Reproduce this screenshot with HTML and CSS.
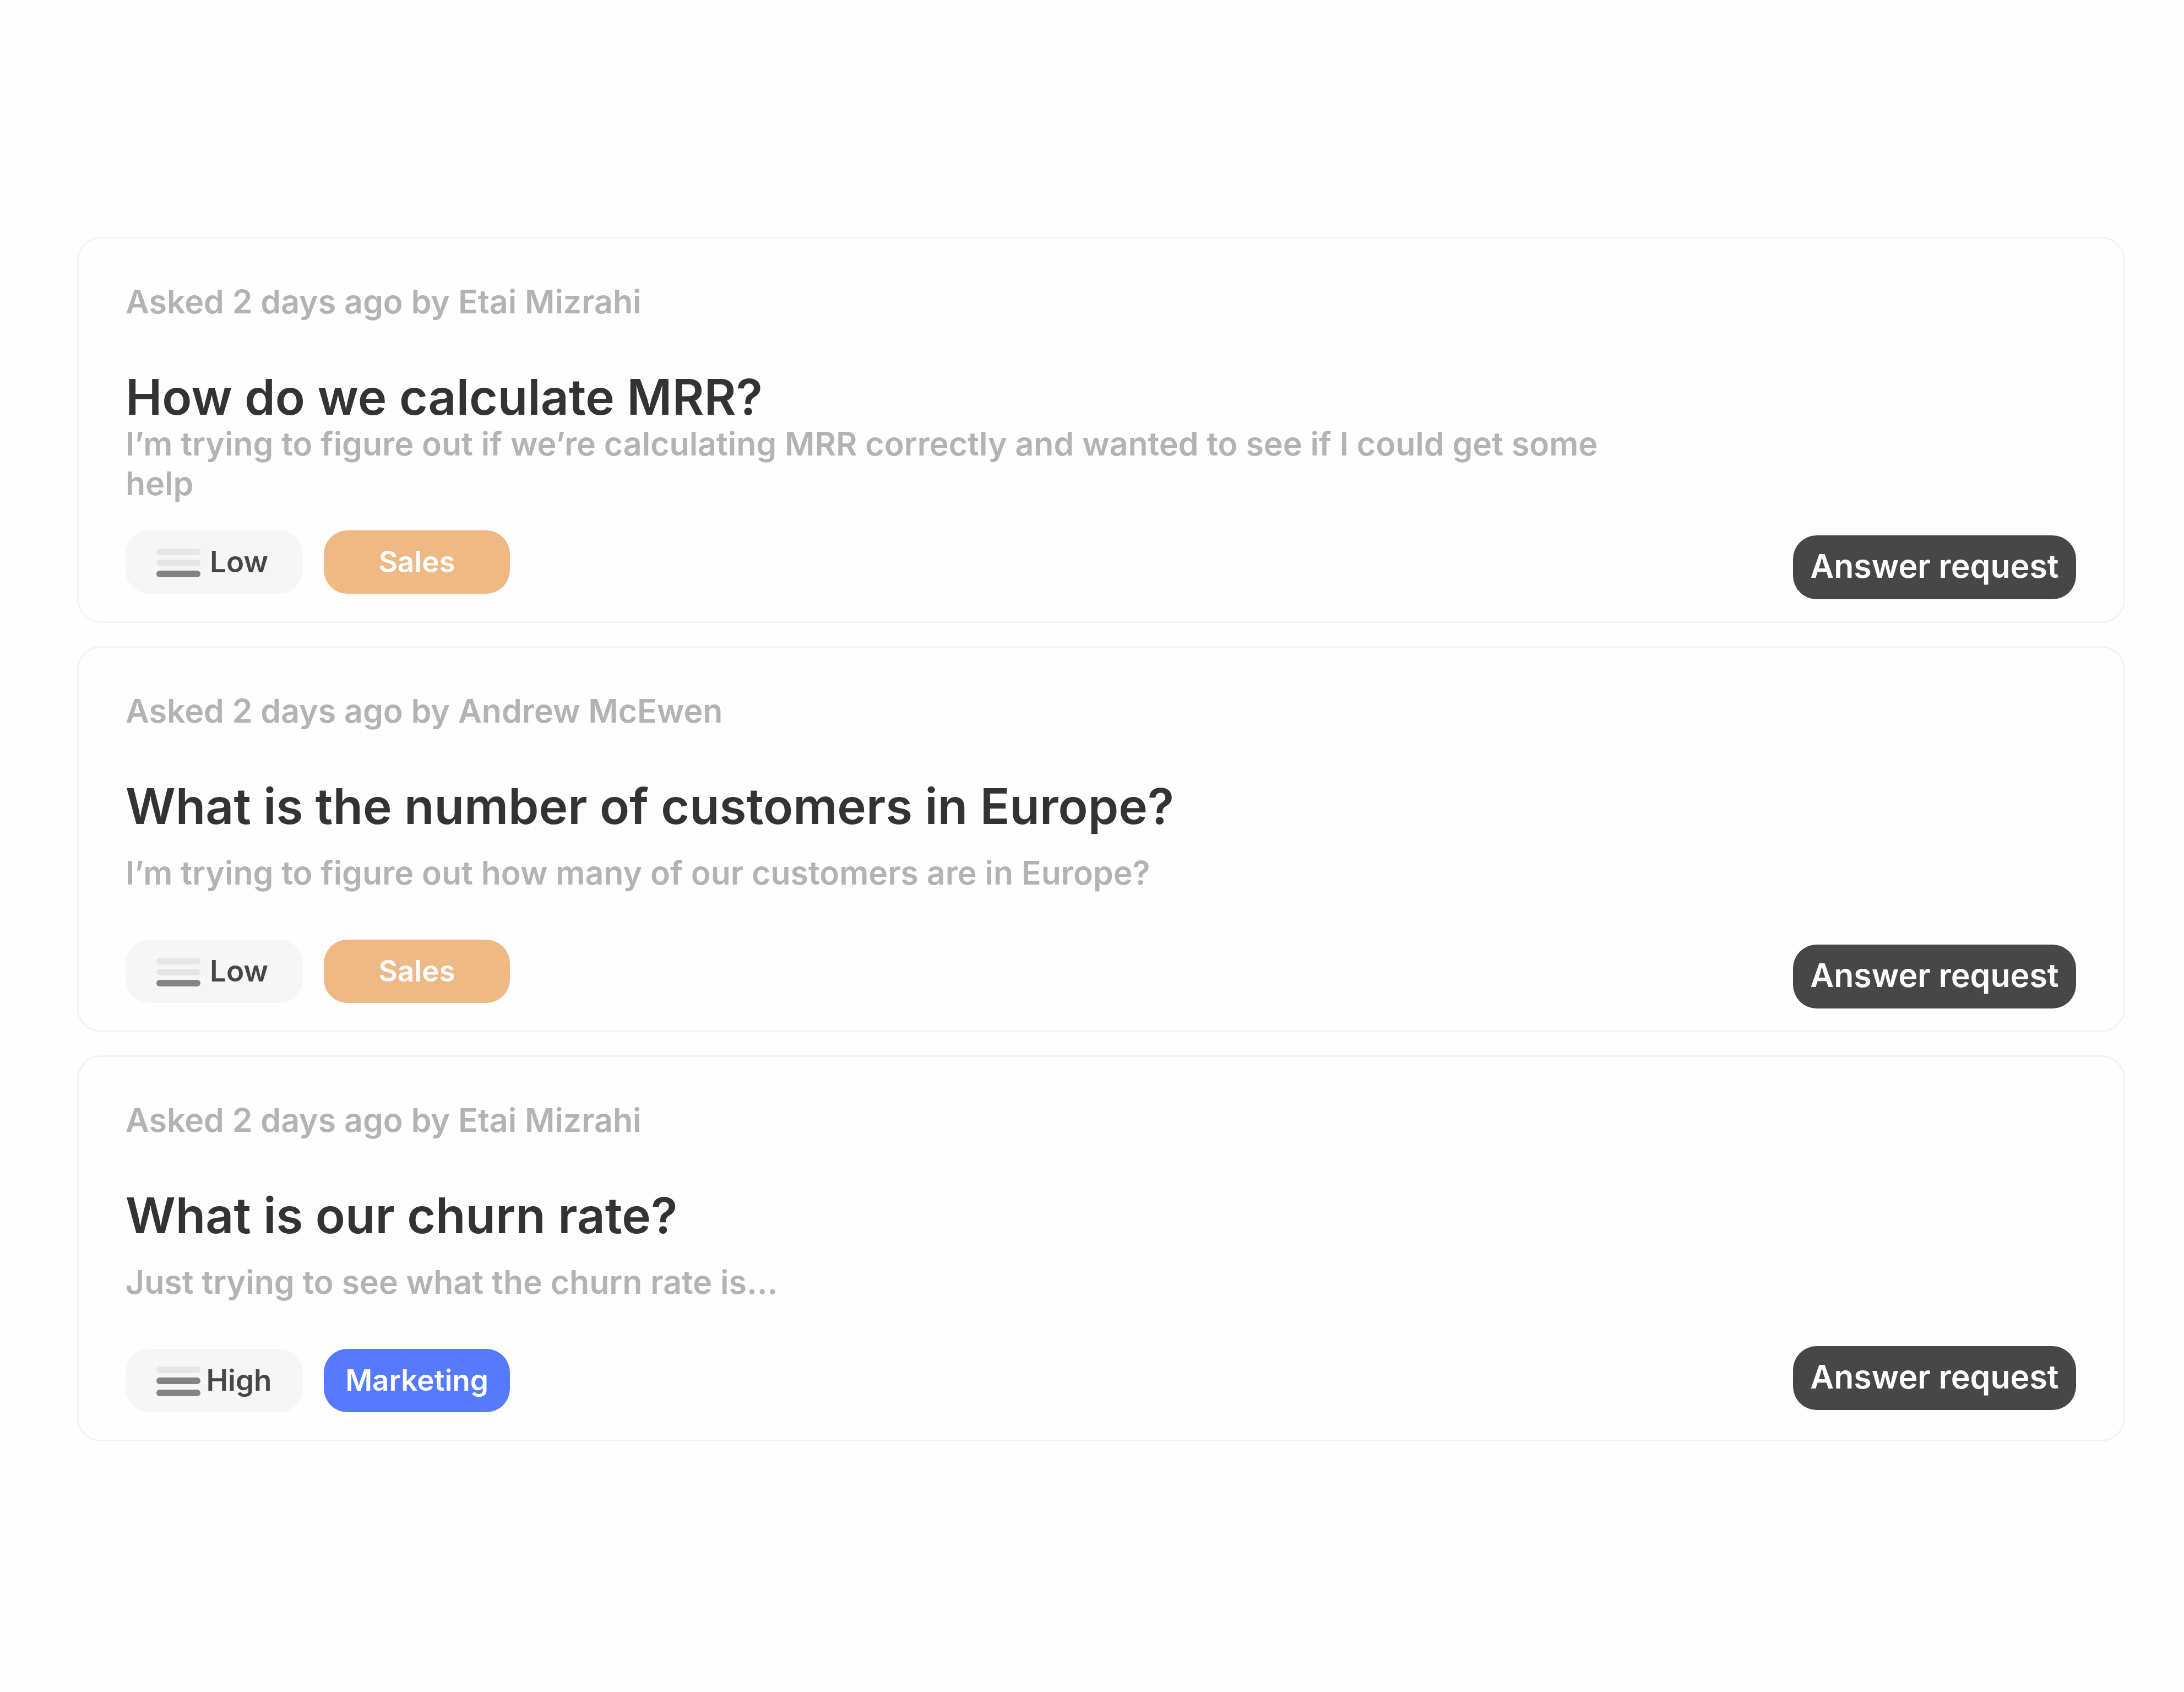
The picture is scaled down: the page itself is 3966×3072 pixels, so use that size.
FILE: index.html
```html
<!DOCTYPE html>
<html lang="en">
<head>
    <meta charset="UTF-8">
    <meta name="viewport" content="width=device-width, initial-scale=1.0">
    <title>Requests</title>
    <link rel="stylesheet" href="styles.css">
</head>
<body>

<main class="requests">
    <article class="card">
        <p class="meta">Asked 2 days ago by Etai Mizrahi</p>
        <h2 class="title">How do we calculate MRR?</h2>
        <div class="description">
            <p>I’m trying to figure out if we’re calculating MRR correctly and wanted to see if I could get some help</p>
        </div>
        <div class="card-footer">
            <div class="tags">
                <span class="tag priority">
                    <svg class="bars" viewBox="0 0 80 52" aria-hidden="true">
                        <rect class="bar" y="0" width="80" height="12" rx="6" />
                        <rect class="bar" y="20" width="80" height="12" rx="6" />
                        <rect class="bar on" y="40" width="80" height="12" rx="6" />
                    </svg>
                    <span class="level">Low</span>
                </span>
                <span class="tag team sales">Sales</span>
            </div>
            <button class="answer" type="button">Answer request</button>
        </div>
    </article>

    <article class="card">
        <p class="meta">Asked 2 days ago by Andrew McEwen</p>
        <h2 class="title">What is the number of customers in Europe?</h2>
        <div class="description">
            <p>I’m trying to figure out how many of our customers are in Europe?</p>
        </div>
        <div class="card-footer">
            <div class="tags">
                <span class="tag priority">
                    <svg class="bars" viewBox="0 0 80 52" aria-hidden="true">
                        <rect class="bar" y="0" width="80" height="12" rx="6" />
                        <rect class="bar" y="20" width="80" height="12" rx="6" />
                        <rect class="bar on" y="40" width="80" height="12" rx="6" />
                    </svg>
                    <span class="level">Low</span>
                </span>
                <span class="tag team sales">Sales</span>
            </div>
            <button class="answer" type="button">Answer request</button>
        </div>
    </article>

    <article class="card">
        <p class="meta">Asked 2 days ago by Etai Mizrahi</p>
        <h2 class="title">What is our churn rate?</h2>
        <div class="description">
            <p>Just trying to see what the churn rate is...</p>
        </div>
        <div class="card-footer top">
            <div class="tags">
                <span class="tag priority">
                    <svg class="bars" viewBox="0 0 80 54" aria-hidden="true">
                        <rect class="bar" y="0" width="80" height="12" rx="6" />
                        <rect class="bar on" y="20" width="80" height="12" rx="6" />
                        <rect class="bar on" y="42" width="80" height="12" rx="6" />
                    </svg>
                    <span class="level">High</span>
                </span>
                <span class="tag team marketing">Marketing</span>
            </div>
            <button class="answer" type="button">Answer request</button>
        </div>
    </article>
</main>

</body>
</html>
```

FILE: styles.css
```css
* {
    box-sizing: border-box;
}
body {
    margin: 0;
    background-color: #fefefe;
    color: #333;
    font-family: Inter, sans-serif;
    font-weight: 600;
}
p, h2 {
    margin: 0;
}
.requests {
    display: flex;
    flex-direction: column;
    gap: 42px;
    padding: 430px 107px 100px 140px;
}
.card {
    display: flex;
    flex-direction: column;
    padding: 79px 86px 40px 85px;
    border: 3px solid #f3f3f3;
    border-radius: 43px;
}
.meta {
    font-size: 59px;
    line-height: 72px;
    color: #b3b3b3;
}
.title {
    margin-top: 88px;
    font-size: 89px;
    line-height: 98px;
    font-weight: 600;
}
/* Room for two lines, a single line sits in the middle */
.description {
    display: flex;
    align-items: center;
    min-height: 144px;
    max-width: 77%;
    font-size: 59px;
    line-height: 72px;
    color: #b3b3b3;
}
.card-footer {
    display: flex;
    justify-content: space-between;
    align-items: flex-end;
    min-height: 130px;
    margin-top: 44px;
}
.card-footer.top {
    align-items: flex-start;
}
.tags {
    display: flex;
    align-self: center;
    gap: 38px;
    padding-bottom: 6px;
}
.tag {
    display: flex;
    align-items: center;
    height: 115px;
    border-radius: 43px;
    font-size: 53px;
}
.priority {
    width: 322px;
    padding: 0 46px 0 56px;
    background-color: #f6f6f6;
    color: #474747;
}
.bars {
    flex: none;
    width: 80px;
    margin-top: 4px;
}
.bar {
    fill: #e5e5e5;
}
.bar.on {
    fill: #838383;
}
.level {
    flex: 1;
    text-align: center;
}
.team {
    justify-content: center;
    width: 338px;
    color: #fefefe;
}
.sales {
    background-color: #efb985;
}
.marketing {
    background-color: #567afd;
}
.answer {
    width: 514px;
    height: 116px;
    padding: 0 0 6px;
    border: none;
    border-radius: 43px;
    background-color: #474747;
    color: #fefefe;
    font-family: inherit;
    font-size: 59px;
    font-weight: 600;
    white-space: nowrap;
    cursor: pointer;
}
.answer:hover {
    background-color: #333;
}
```
